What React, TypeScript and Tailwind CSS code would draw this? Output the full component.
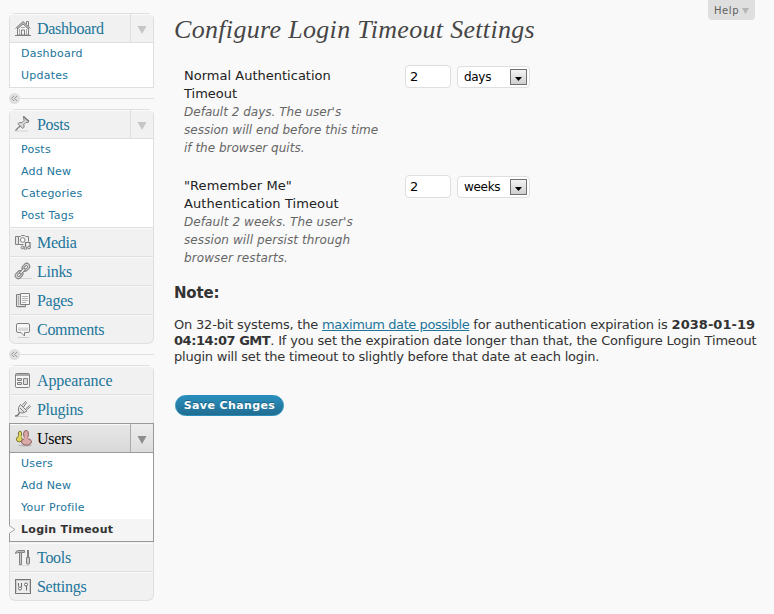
import React from "react";

const serif = "font-['Liberation_Serif',Georgia,serif]";

type IconName =
  | "dashboard" | "posts" | "media" | "links" | "pages" | "comments"
  | "appearance" | "plugins" | "users" | "tools" | "settings";

const icons: Record<IconName, React.ReactNode> = {
  dashboard: (
    <>
      <path d="M3.500 10v7h11v-7L9 4.500z" fill="#f4f4f4" />
      <path d="M1.500 10.500 9 3.500l7.500 7M12.500 6V3.500h2V8M3.500 10v6.500M14.500 10v6.500M1 17.500h16M7.500 17v-5h3v5M4 10.500 9 6l5 4.500" />
      <path d="M7 9.500h4M5.500 11v6M12.500 11v6" stroke="#aaa" />
    </>
  ),
  posts: (
    <>
      <path d="M1 17h13" stroke="#d0d0d0" />
      <path d="M1.500 16.500 6.500 11.500" strokeWidth="1.200" />
      <path d="m9.500 2.500 5.500 5-1.200 1.200-1.800-.4-2.200 2.200.4 2.500-1.500 1.500L4 9.800 5.300 8.400l2.500.4 2.400-2.500-.7-1.800z" fill="#d8d8d8" />
      <path d="m9.500 2.500 5.500 5" stroke="#777" strokeWidth="1.500" />
    </>
  ),
  media: (
    <>
      <path d="M1.500 4.500h3v8h-3z" fill="#e2e2e2" />
      <path d="M4.500 12.500v-8h2l1-1h3l1 1h3v5" fill="#eee" />
      <path d="M4.500 12.500h5" />
      <circle cx="8.700" cy="8" r="2.300" fill="#fff" />
      <path d="M11.500 16v-5.500h4.500V16" stroke="#777" strokeWidth="1.200" />
      <circle cx="8.500" cy="15.500" r="1.400" fill="#ddd" />
      <circle cx="11.500" cy="16" r="1.400" fill="#ddd" />
      <circle cx="15" cy="15.500" r="1.400" fill="#ddd" />
    </>
  ),
  links: (
    <>
      <path d="M5 17.500h13" stroke="#d4d4d4" />
      <g transform="rotate(-48 8.500 10)">
        <rect x="-.8" y="7" width="8.500" height="6" rx="3" fill="#ddd" />
        <rect x="9.300" y="7" width="8.500" height="6" rx="3" fill="#ddd" />
        <rect x="1.500" y="8.800" width="4" height="2.400" rx="1.200" fill="#fff" />
        <rect x="11.500" y="8.800" width="4" height="2.400" rx="1.200" fill="#fff" />
        <rect x="5" y="8.800" width="7" height="2.400" rx="1.200" fill="#eee" />
      </g>
    </>
  ),
  pages: (
    <>
      <path d="M6.500 4.500h-4v12h9v-2" fill="#ddd" />
      <path d="M6.500 3.500h9v11h-9z" fill="#f6f6f6" />
      <path d="M8 6.500h6M8 8.500h6M8 10.500h6M8 12.500h4M4.500 6v9" stroke="#b0b0b0" />
      <path d="M3 17.500h9" stroke="#d4d4d4" />
    </>
  ),
  comments: (
    <>
      <path d="M4 18.500h11" stroke="#ccc" />
      <path d="M4 4.500h10q1.500 0 1.500 1.500v6q0 1.500-1.500 1.500h-3.500V17L7 13.500H4Q2.500 13.500 2.500 12V6Q2.500 4.500 4 4.500z" fill="#f8f8f8" />
      <path d="M4 8.500h10V12H4z" fill="#d9d9d9" stroke="none" />
    </>
  ),
  appearance: (
    <>
      <rect x="1.500" y="3.500" width="14" height="14" rx="1" fill="#f7f7f7" />
      <path d="M2 4.500h13M2 5.500h13" stroke="#aaa" />
      <path d="M3.500 8.500h4v2h-4zM3.500 12.500h4v2h-4zM9.500 8.500h4v6h-4z" fill="#ddd" />
    </>
  ),
  plugins: (
    <>
      <path d="M1 17.500h13" stroke="#ccc" />
      <path d="M1 17q3.500 0 4.500-4" strokeWidth="1.500" />
      <path d="M6.500 5.500 13 12q-3 2.500-6.500 2L4.500 12Q3.500 8.500 6.500 5.500z" fill="#e5e5e5" />
      <path d="m8 6.500 3.500-4 1 1-3 4.500M11.500 10l4-3.500 1 1-4 3.500M6 9l4 4" />
    </>
  ),
  users: (
    <>
      <ellipse cx="11" cy="17.500" rx="7" ry="1" fill="#bbb" stroke="none" />
      <g fill="#ddd65b" stroke="#7c783c">
        <ellipse cx="5.300" cy="11.200" rx="2.900" ry="2.700" />
        <ellipse cx="6" cy="6" rx="1.700" ry="2.900" />
      </g>
      <path d="M4.800 7.500h2.500v3H4.500z" fill="#ddd65b" stroke="none" />
      <g fill="#dba9a9" stroke="#875b5b">
        <ellipse cx="12.500" cy="13.800" rx="5" ry="3.300" />
        <ellipse cx="12" cy="6.300" rx="2.400" ry="3.900" />
      </g>
      <path d="M10.500 8.500h3l.5 4h-4z" fill="#dba9a9" stroke="none" />
    </>
  ),
  tools: (
    <>
      <path d="M1.500 6.500V5.500Q2.500 3.500 4.500 3.500h6v2H7.500Q3.500 5 1.500 6.500z" fill="#bbb" />
      <path d="M5.500 5.500v12h2v-12z" fill="#ccc" />
      <path d="M14 3v7" strokeWidth="2" />
      <path d="M12.500 10.500h3v6q-1.500 1.500-3 0z" fill="#ccc" />
      <path d="M4 18.500h12" stroke="#ddd" />
    </>
  ),
  settings: (
    <>
      <rect x="1.500" y="3.500" width="15" height="14" fill="#eee" stroke="#777" />
      <path d="M2.500 16V4.500h13V16" stroke="#ccc" />
      <circle cx="6" cy="12.500" r="1.500" fill="#fff" stroke="#666" />
      <circle cx="12" cy="8.500" r="1.500" fill="#fff" stroke="#666" />
      <path d="M4.500 7v3.500M7.500 7v4M12.500 10v4.500" stroke="#666" />
    </>
  ),
};

function Icon({ name }: { name: IconName }) {
  return (
    <svg className="ml-[4px] h-5 w-[19px] shrink-0" viewBox="0 0 19 20" fill="none" stroke="#808080" strokeWidth="1">
      {icons[name]}
    </svg>
  );
}

function MenuHeader({ name, label, toggle, active, last }: {
  name: IconName; label: string; toggle?: boolean; active?: boolean; last?: boolean;
}) {
  return (
    <div
      className={`flex h-[29px] border-b ${
        active ? "border-[#999] bg-linear-to-b from-[#e7e7e7] to-[#d9d9d9]" : "border-[#dfdfdf] bg-[#f1f1f1]"
      } ${last ? "rounded-b-[6px]" : ""} shadow-[inset_0_1px_0_#fafafa]`}
    >
      <div className="flex flex-1 items-center">
        <Icon name={name} />
        <span className={`ml-[4px] whitespace-nowrap pt-px text-[16px] leading-[26px] ${name === "appearance" ? "tracking-[-0.1px]" : "tracking-[-0.28px]"} ${serif} ${active ? "text-black" : "text-[#21759b]"}`}>
          {label}
        </span>
      </div>
      {toggle && (
        <div className={`flex w-[23px] items-center justify-center border-l pt-[3px] ${active ? "border-[#aaa] bg-linear-to-b from-[#ededed] to-[#dcdcdc]" : "border-[#dfdfdf]"}`}>
          <svg className="h-2 w-[10px]" viewBox="0 0 10 8">
            <path d="M.5 0h9L5 8z" fill={active ? "#8e8e8e" : "#c6c6c6"} />
          </svg>
        </div>
      )}
    </div>
  );
}

function SubMenu({ items, active }: { items: string[]; active?: boolean }) {
  return (
    <ul className={`border-b bg-white ${active ? "border-[#999]" : "border-[#dfdfdf]"}`}>
      {items.map((t) => {
        const current = t === "Login Timeout";
        return (
          <li
            key={t}
            className={`relative flex h-[22px] items-center pl-[11px] pt-px text-[11px] ${
              current ? "bg-[#f5f5f5] font-bold text-[#333]" : "text-[#21759b]"
            }`}
          >
            {current && (
              <svg className="absolute -left-px top-[6px] h-[9px] w-[7px]" viewBox="0 0 7 9">
                <path d="M0 0v9l6-4.500z" fill="#f9f9f9" />
                <path d="M0 .5 6 4.500 0 8.500" fill="none" stroke="#aaa" />
              </svg>
            )}
            <span className={current ? "tracking-[0.28px]" : "tracking-[0.22px]"}>{t}</span>
          </li>
        );
      })}
    </ul>
  );
}

function Separator() {
  return (
    <div className="flex h-[21px] items-center">
      <svg className="h-[11px] w-[11px]" viewBox="0 0 11 11">
        <circle cx="5.500" cy="5.500" r="5.500" fill="#dfdfdf" />
        <path d="M5 3 2.500 5.500 5 8M8 3 5.500 5.500 8 8" fill="none" stroke="#999" />
      </svg>
      <div className="h-px flex-1 bg-[#dfdfdf]" />
    </div>
  );
}

function TimeoutRow({ title, description, unit, track }: { title: string[]; description: string[]; unit: string; track: string }) {
  return (
    <div className="flex h-[110px]">
      <div className={`mt-px w-[221px] whitespace-nowrap text-[13px] leading-[18px] ${track}`}>
        {title.map((l) => <div key={l} className="text-[#222]">{l}</div>)}
        {description.map((l) => <div key={l} className="text-[12px] italic text-[#666]">{l}</div>)}
      </div>
      <input
        className="-mt-px h-[23px] w-[46px] rounded-[4px] border border-[#dfdfdf] bg-white px-[4px] text-[13px] text-black outline-none"
        defaultValue="2"
      />
      <div className="ml-[6px] flex h-[22px] w-[73px] items-center justify-between rounded-[4px] border border-[#dfdfdf] bg-white pl-[6px] pr-[2px] text-[12px] text-black">
        <span className="tracking-[-0.3px]">{unit}</span>
        <span className="flex h-4 w-[17px] items-center justify-center border border-[#707070] bg-linear-to-b from-[#f4f4f4] to-[#cfcfcf] pt-[3px]">
          <svg className="h-1 w-[7px]" viewBox="0 0 7 4"><path d="M0 0h7L3.500 4z" fill="#000" /></svg>
        </span>
      </div>
    </div>
  );
}

export default function App() {
  return (
    <div className="flex h-[614px] w-[774px] overflow-hidden bg-[#f9f9f9] font-['DejaVu_Sans',Verdana,sans-serif] text-[#333]">
      <nav className="ml-[9px] w-[145px] shrink-0 pt-[13px]">
        <div className="rounded-t-[6px] border border-b-0 border-[#dfdfdf] bg-[#f1f1f1]">
          <MenuHeader name="dashboard" label="Dashboard" toggle />
          <SubMenu items={["Dashboard", "Updates"]} />
        </div>
        <Separator />
        <div className="rounded-[6px] border border-b-0 border-[#dfdfdf] bg-[#f1f1f1]">
          <MenuHeader name="posts" label="Posts" toggle />
          <SubMenu items={["Posts", "Add New", "Categories", "Post Tags"]} />
          <MenuHeader name="media" label="Media" />
          <MenuHeader name="links" label="Links" />
          <MenuHeader name="pages" label="Pages" />
          <MenuHeader name="comments" label="Comments" last />
        </div>
        <Separator />
        <div className="rounded-t-[6px] border border-b-0 border-[#dfdfdf] bg-[#f1f1f1]">
          <MenuHeader name="appearance" label="Appearance" />
          <MenuHeader name="plugins" label="Plugins" />
        </div>
        <div className="-mt-px border border-b-0 border-[#999]">
          <MenuHeader name="users" label="Users" toggle active />
          <SubMenu items={["Users", "Add New", "Your Profile", "Login Timeout"]} active />
        </div>
        <div className="rounded-b-[6px] border-x border-[#dfdfdf] bg-[#f1f1f1] pt-px">
          <MenuHeader name="tools" label="Tools" />
          <MenuHeader name="settings" label="Settings" last />
        </div>
      </nav>

      <main className="ml-[20px] flex-1">
        <div className="flex justify-between">
          <h1 className="whitespace-nowrap pt-[12px] font-['Liberation_Serif',Georgia,serif] text-[26px] italic leading-[35px] tracking-[0.32px] text-[#464646]">
            Configure Login Timeout Settings
          </h1>
          <div className="mr-[19px] flex h-5 w-[47px] items-center rounded-b-[4px] bg-[#dfdfdf] pl-[6px] text-[10px] text-[#606060]">
            <span className="tracking-[0.6px]">Help</span>
            <svg className="ml-[3px] mt-[2px] h-[6px] w-[7px]" viewBox="0 0 7 6"><path d="M0 0h7L3.500 6z" fill="#b5b5b5" /></svg>
          </div>
        </div>

        <form className="pt-[19px]" onSubmit={(e) => e.preventDefault()}>
          <div className="pl-[10px]">
            <TimeoutRow
              title={["Normal Authentication", "Timeout"]}
              description={["Default 2 days. The user's", "session will end before this time", "if the browser quits."]}
              unit="days"
              track="tracking-[0.01px]"
            />
            <TimeoutRow
              title={['"Remember Me"', "Authentication Timeout"]}
              description={["Default 2 weeks. The user's", "session will persist through", "browser restarts."]}
              unit="weeks"
              track="tracking-[0.09px]"
            />
          </div>
          <h3 className="-mt-[3px] text-[15px] font-bold leading-5 tracking-[-0.2px]">Note:</h3>
          <div className="mt-[14px] whitespace-nowrap text-[13px] leading-4">
            <p>
              <span className="tracking-[-0.19px]">On 32-bit systems, the </span>
              <a className="tracking-[-0.43px] text-[#21759b] underline">maximum date possible</a>
              <span className="tracking-[-0.2px]"> for authentication expiration is </span>
              <b className="tracking-[0.05px]">2038-01-19</b>
            </p>
            <p>
              <b className="tracking-[-0.45px]">04:14:07 GMT</b>
              <span className="tracking-[-0.18px]">. If you set the expiration date longer than that, the Configure Login Timeout</span>
            </p>
            <p className="tracking-[-0.22px]">plugin will set the timeout to slightly before that date at each login.</p>
          </div>
          <button className="ml-px mt-[30px] flex h-[21px] w-[109px] items-center justify-center whitespace-nowrap rounded-full border border-[#298cba] bg-linear-to-b from-[#298fbd] to-[#216d91] pt-[2px] text-[11px] font-bold tracking-[0.4px] text-white [text-shadow:0_-1px_0_rgba(0,0,0,0.3)]">
            Save Changes
          </button>
        </form>
      </main>
    </div>
  );
}
